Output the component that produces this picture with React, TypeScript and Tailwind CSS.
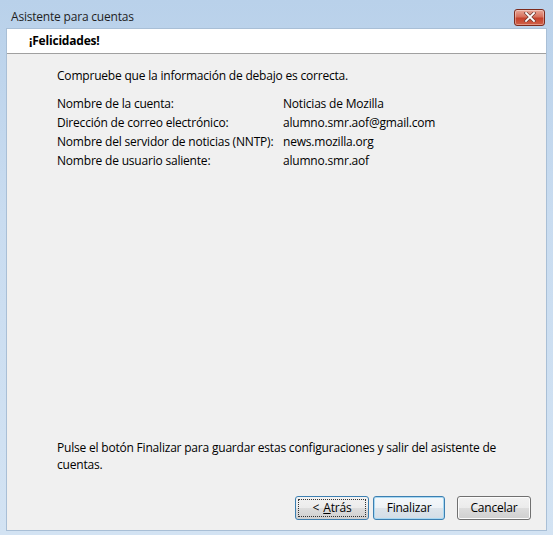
export default function App() {
  const rows: [string, string][] = [
    ["Nombre de la cuenta:", "Noticias de Mozilla"],
    ["Dirección de correo electrónico:", "alumno.smr.aof@gmail.com"],
    ["Nombre del servidor de noticias (NNTP):", "news.mozilla.org"],
    ["Nombre de usuario saliente:", "alumno.smr.aof"],
  ];

  return (
    <div
      className="w-[553px] h-[535px] flex flex-col bg-[linear-gradient(180deg,#b9d1ea_0%,#c9dcf0_40%,#d3e3f3_100%)] text-[12px] text-black"
      style={{ fontFamily: '"Open Sans", "Noto Sans", sans-serif' }}
    >
      {/* Title bar */}
      <div className="h-[28px] pt-[6px] flex items-center justify-between pl-[11px] pr-[8px]">
        <span className="text-[12px] text-[#1e1e1e] tracking-[-0.2px]">Asistente para cuentas</span>
        <div className="w-[31px] h-[17px] rounded-[3px] border border-[#7d2a1c] bg-[linear-gradient(180deg,#e9a898_0%,#d7705c_45%,#c5412b_55%,#d0624a_100%)] flex items-center justify-center shadow-[inset_0_0_0_1px_rgba(255,255,255,0.35)]">
          <svg width="12" height="10" viewBox="0 0 12 10">
            <path d="M2 1 L10 9 M10 1 L2 9" stroke="#6b3a33" strokeWidth="3.2" strokeLinecap="square" />
            <path d="M2 1 L10 9 M10 1 L2 9" stroke="#ffffff" strokeWidth="1.8" strokeLinecap="square" />
          </svg>
        </div>
      </div>

      {/* Client area */}
      <div className="flex-1 mx-[6px] mb-[4px] border border-[#a9bfd6] flex flex-col">
        <div className="h-[25px] bg-white border-b border-[#a0a0a0] flex items-center pl-[22px]">
          <span className="font-bold text-[12px] tracking-[-0.2px]">¡Felicidades!</span>
        </div>

        <div className="flex-1 bg-[#f0f0f0] flex flex-col pl-[50px] pr-[20px] pt-[13px] pb-[10px] tracking-[-0.2px]">
          <p className="leading-[17px]">Compruebe que la información de debajo es correcta.</p>

          <div className="mt-[10px] flex flex-col">
            {rows.map(([k, v]) => (
              <div key={k} className="flex leading-[19px]">
                <span className="w-[226px] shrink-0">{k}</span>
                <span>{v}</span>
              </div>
            ))}
          </div>

          <div className="flex-1" />

          <p className="leading-[17px] pr-[20px]">
            Pulse el botón Finalizar para guardar estas configuraciones y salir del asistente de cuentas.
          </p>

          <div className="mt-[23px] flex justify-end mr-[-5px]">
            <button className="w-[74px] h-[24px] rounded-[3px] border border-[#3c7fb1] bg-[linear-gradient(180deg,#f2f2f2_0%,#ebebeb_50%,#dddddd_50%,#cfcfcf_100%)] p-[2px]">
              <span className="flex h-full w-full items-center justify-center border border-dotted border-[#333]">
                &lt; <span className="underline ml-[4px]">A</span>trás
              </span>
            </button>
            <button className="ml-[4px] w-[72px] h-[24px] rounded-[3px] border border-[#3c7fb1] bg-[linear-gradient(180deg,#f4f8fb_0%,#edf2f6_50%,#dde5ec_50%,#d3dde6_100%)] shadow-[inset_0_0_0_1px_#a8d8f2] flex items-center justify-center">
              Finalizar
            </button>
            <button className="ml-[12px] w-[74px] h-[24px] rounded-[3px] border border-[#707070] bg-[linear-gradient(180deg,#f2f2f2_0%,#ebebeb_50%,#dddddd_50%,#cfcfcf_100%)] shadow-[inset_0_0_0_1px_#fcfcfc] flex items-center justify-center">
              Cancelar
            </button>
          </div>
        </div>
      </div>
    </div>
  );
}
